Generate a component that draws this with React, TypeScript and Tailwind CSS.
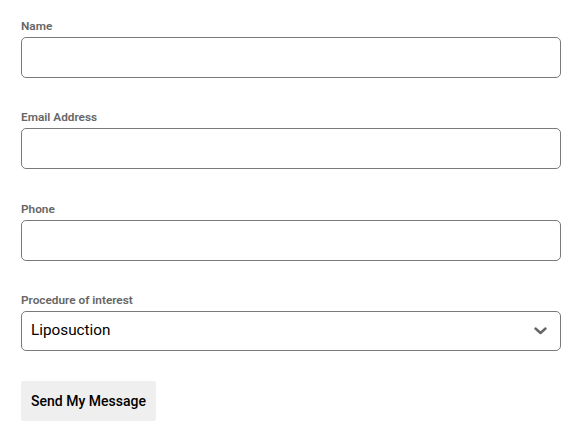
import React from 'react';

const fields = ['Name', 'Email Address', 'Phone'];

const Label: React.FC<{ text: string }> = ({ text }) => (
  <label className="block text-[11.8px] leading-4 font-semibold text-[#666666] mb-[3px]">{text}</label>
);

export default function App() {
  return (
    <div className="bg-white min-h-screen pt-[18px] px-[21px] font-['Roboto',sans-serif]">
      <form className="w-[540px] flex flex-col gap-[31.3px]" onSubmit={(e) => e.preventDefault()}>
        {fields.map((f) => (
          <div key={f}>
            <Label text={f} />
            <input
              type="text"
              className="block w-full h-[41px] rounded-[5px] border border-[#7a7a7a] bg-white px-[10px] text-[16px] outline-none"
            />
          </div>
        ))}
        <div>
          <Label text="Procedure of interest" />
          <div className="relative">
            <select
              defaultValue="Liposuction"
              className="block w-full h-[40px] appearance-none rounded-[5px] border border-[#7a7a7a] bg-white pl-[9px] pr-8 text-[15.3px] text-black outline-none"
            >
              <option>Liposuction</option>
              <option>Tummy Tuck</option>
              <option>Breast Augmentation</option>
            </select>
            <svg
              className="absolute right-[14px] top-1/2 -translate-y-1/2 pointer-events-none"
              width="13"
              height="8"
              viewBox="0 0 13 8"
              fill="none"
            >
              <path d="M1.5 1.5L6.5 6L11.5 1.5" stroke="#666666" strokeWidth="2.4" strokeLinecap="round" strokeLinejoin="round" />
            </svg>
          </div>
        </div>
        <div className="-mt-px">
          <button
            type="submit"
            className="h-[40px] w-[135px] bg-[#efefef] text-[14px] font-medium text-black rounded-[2px]"
          >
            Send My Message
          </button>
        </div>
      </form>
    </div>
  );
}
